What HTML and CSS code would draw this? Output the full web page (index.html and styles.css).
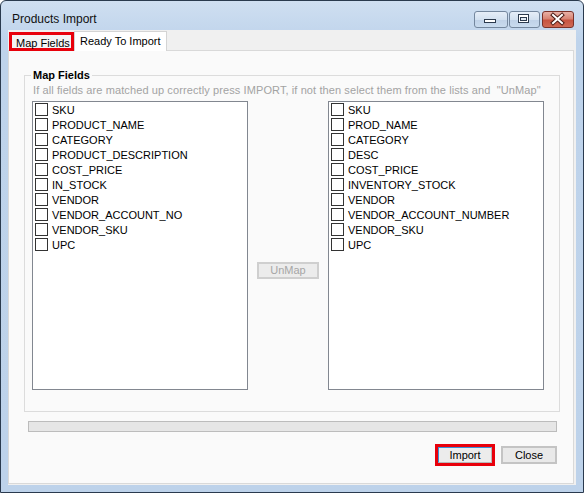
FILE: index.html
```html
<!DOCTYPE html>
<html>
<head>
<meta charset="utf-8">
<title>Products Import</title>
<link rel="stylesheet" href="styles.css">
</head>
<body>
<div class="window">
  <div class="titlebar">
    <span class="title">Products Import</span>
    <div class="caption">
      <span class="cap cap-min"><svg width="32" height="15" viewBox="0 0 32 15"><rect x="9.5" y="7.5" width="11" height="3" fill="#fff" stroke="#2c3a4d"/></svg></span>
      <span class="cap cap-max"><svg width="29" height="15" viewBox="0 0 29 15"><rect x="8.5" y="2.5" width="10" height="8" fill="#fff" stroke="#2c3a4d"/><rect x="10.5" y="5.5" width="6" height="3" fill="#dfe8f2" stroke="#2c3a4d"/></svg></span>
      <span class="cap cap-close"><svg width="30" height="15" viewBox="0 0 30 15"><path d="M10 3 L19 11 M19 3 L10 11" stroke="#4a1a14" stroke-width="4" stroke-linecap="square" fill="none"/><path d="M10 3 L19 11 M19 3 L10 11" stroke="#fff" stroke-width="2" stroke-linecap="square" fill="none"/></svg></span>
    </div>
  </div>
  <div class="client">
    <div class="tabs">
      <div class="tab tab-map">Map Fields</div>
      <div class="tab tab-ready">Ready To Import</div>
    </div>
    <div class="tabpage">
      <div class="group">
        <div class="group-title">Map Fields</div>
        <div class="hint">If all fields are matched up correctly press IMPORT, if not then select them from the lists and &nbsp;"UnMap"</div>
        <div class="lists">
          <ul class="list">
            <li><span class="cb"></span>SKU</li>
            <li><span class="cb"></span>PRODUCT_NAME</li>
            <li><span class="cb"></span>CATEGORY</li>
            <li><span class="cb"></span>PRODUCT_DESCRIPTION</li>
            <li><span class="cb"></span>COST_PRICE</li>
            <li><span class="cb"></span>IN_STOCK</li>
            <li><span class="cb"></span>VENDOR</li>
            <li><span class="cb"></span>VENDOR_ACCOUNT_NO</li>
            <li><span class="cb"></span>VENDOR_SKU</li>
            <li><span class="cb"></span>UPC</li>
          </ul>
          <div class="middle"><button class="btn btn-unmap" disabled>UnMap</button></div>
          <ul class="list">
            <li><span class="cb"></span>SKU</li>
            <li><span class="cb"></span>PROD_NAME</li>
            <li><span class="cb"></span>CATEGORY</li>
            <li><span class="cb"></span>DESC</li>
            <li><span class="cb"></span>COST_PRICE</li>
            <li><span class="cb"></span>INVENTORY_STOCK</li>
            <li><span class="cb"></span>VENDOR</li>
            <li><span class="cb"></span>VENDOR_ACCOUNT_NUMBER</li>
            <li><span class="cb"></span>VENDOR_SKU</li>
            <li><span class="cb"></span>UPC</li>
          </ul>
        </div>
      </div>
      <div class="progress"></div>
      <div class="actions">
        <span class="highlight"><button class="btn btn-import">Import</button></span>
        <button class="btn btn-close">Close</button>
      </div>
    </div>
  </div>
</div>
</body>
</html>
```

FILE: styles.css
```css
html, body {
  margin: 0;
  padding: 0;
  background: #ffffff;
}

.window {
  width: 584px;
  height: 493px;
  box-sizing: border-box;
  border: 1px solid #2a3a4e;
  border-radius: 6px 6px 0 0;
  background: linear-gradient(#cfdff1, #bed3eb 40px, #bdd2ea);
  padding: 0 7px 7px 7px;
  display: flex;
  flex-direction: column;
  font-family: "Liberation Sans", Arial, sans-serif;
}

.titlebar {
  height: 29px;
  box-sizing: border-box;
  padding-top: 10px;
  display: flex;
  align-items: flex-start;
}

.title {
  flex: 1;
  margin-left: 4px;
  font-size: 12px;
  line-height: 17px;
  color: #111;
}

.caption {
  display: flex;
  margin-right: 2px;
}

.cap {
  display: block;
  height: 17px;
  box-sizing: border-box;
  border: 1px solid #74879e;
  border-radius: 3px;
  background: linear-gradient(#e6eef8, #d3e1f0 50%, #bfd1e7 51%, #c9dbee);
}

.cap svg {
  display: block;
}

.cap-min {
  width: 34px;
}

.cap-max {
  width: 31px;
  margin-left: 1px;
}

.cap-close {
  width: 32px;
  margin-left: 2px;
  border-color: #7a3128;
  background: linear-gradient(#e9b1a7, #d88473 45%, #c75441 55%, #cf6a55);
}

.client {
  width: 568px;
  height: 455px;
  background: #f0f0f0;
  display: flex;
  flex-direction: column;
}

.tabs {
  height: 20px;
  display: flex;
  align-items: flex-end;
  padding-left: 1px;
  font-size: 11px;
  line-height: 13px;
  color: #000;
}

.tab {
  box-sizing: border-box;
  white-space: nowrap;
}

.tab-map {
  width: 65px;
  height: 19px;
  border: 3px solid #e8000b;
  padding: 2px 0 0 4px;
  margin-bottom: -1px;
  background: #f4f4f4;
  position: relative;
  z-index: 1;
}

.tab-ready {
  width: 93px;
  height: 20px;
  border: 1px solid #d4d4d4;
  border-bottom: none;
  background: #ffffff;
  padding: 3px 0 0 5px;
  margin-bottom: -1px;
  position: relative;
  z-index: 1;
}

.tabpage {
  width: 566px;
  height: 434px;
  box-sizing: border-box;
  border: 1px solid #d9d9d9;
  background: #fafafa;
  display: flex;
  flex-direction: column;
}

.group {
  width: 536px;
  height: 337px;
  box-sizing: border-box;
  margin: 24px 0 0 15px;
  border: 1px solid #dcdcdc;
  display: flex;
  flex-direction: column;
  font-size: 11px;
  line-height: 13px;
}

.group-title {
  align-self: flex-start;
  margin: -7px 0 0 6px;
  padding: 0 2px;
  background: #fafafa;
  font-weight: bold;
  color: #000;
}

.hint {
  margin-top: 2px;
  padding-left: 8px;
  color: #a3a3a3;
  white-space: nowrap;
  letter-spacing: 0.1px;
}

.lists {
  display: flex;
  margin: 4px 0 0 7px;
}

.list {
  list-style: none;
  margin: 0;
  padding: 0 0 0 2px;
  width: 216px;
  height: 289px;
  box-sizing: border-box;
  border: 1px solid #828790;
  background: #ffffff;
}

.list li {
  display: flex;
  align-items: center;
  height: 15px;
  line-height: 16px;
  color: #000;
  white-space: nowrap;
}

.cb {
  width: 13px;
  height: 13px;
  box-sizing: border-box;
  border: 1px solid #333333;
  background: #ffffff;
  margin-right: 4px;
  flex: none;
}

.middle {
  width: 80px;
  display: flex;
  justify-content: center;
  align-items: flex-start;
}

.btn {
  font-family: "Liberation Sans", Arial, sans-serif;
  font-size: 11px;
  line-height: 13px;
  padding: 0;
  box-sizing: border-box;
  color: #000;
  border: 1px solid #acacac;
  border-radius: 0;
  background: #e8e8e8;
}

.btn-unmap {
  width: 62px;
  height: 17px;
  margin-top: 161px;
  border: 2px solid #cfcfcf;
  background: #ececec;
  color: #a6a6a6;
}

.progress {
  width: 529px;
  height: 11px;
  box-sizing: border-box;
  margin: 9px 0 0 19px;
  border: 1px solid #bcbcbc;
  background: #e6e6e6;
}

.actions {
  height: 22px;
  margin-top: 12px;
  padding-right: 16px;
  display: flex;
  justify-content: flex-end;
  align-items: center;
}

.highlight {
  display: block;
  width: 60px;
  height: 22px;
  box-sizing: border-box;
  border: 3px solid #e8000b;
}

.btn-import {
  display: block;
  width: 54px;
  height: 16px;
  border: 1px solid #3c8fd6;
  border-right-color: #b8b8b8;
  border-bottom-color: #b8b8b8;
  background: #ececec;
}

.btn-close {
  width: 56px;
  height: 18px;
  margin-left: 6px;
  border: 2px solid #c4c4c4;
  background: #e9e9e9;
}
```
